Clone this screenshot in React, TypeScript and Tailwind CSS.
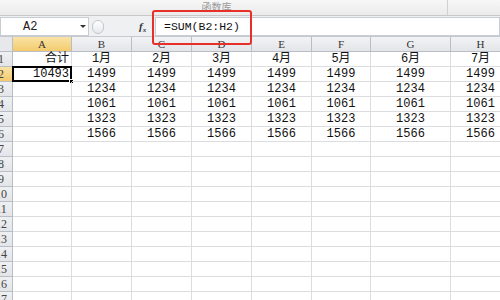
import React from "react";

const cols = ["A", "B", "C", "D", "E", "F", "G", "H"];
const months = ["1月", "2月", "3月", "4月", "5月", "6月", "7月"];
const values = ["1499", "1234", "1061", "1323", "1566"];
const rowCount = 17;

const cellFont = { fontFamily: '"Liberation Mono", "Noto Sans CJK SC", monospace' };

export default function App() {
  const rows = Array.from({ length: rowCount }, (_, i) => i + 1);

  const cellText = (r: number, c: number) => {
    if (c === 0) {
      if (r === 1) return "合计";
      if (r === 2) return "10493";
      return "";
    }
    if (r === 1) return months[c - 1];
    if (r >= 2 && r <= 6) return values[r - 2];
    return "";
  };

  return (
    <div className="w-[500px] h-[300px] overflow-hidden bg-white relative">
      {/* ribbon strip */}
      <div className="h-[16px] border-b border-[#c8c8c8] bg-gradient-to-b from-[#f7f7f7] to-[#ebebeb] flex">
        <div className="w-[448px] border-r border-[#d0d0d0] flex justify-center">
          <span
            className="text-[10px] leading-[14px] text-[#9a9a9a] ml-[-14px]"
            style={{ fontFamily: '"Noto Sans CJK SC", sans-serif' }}
          >
            函数库
          </span>
        </div>
      </div>

      {/* formula bar */}
      <div className="h-[21px] flex items-stretch bg-[#eef0f2] border-b border-[#c6c9ce] pt-px">
        <div className="w-[89px] bg-white border border-[#c8cdd4] flex items-center relative">
          <span className="text-[12px] text-[#222] ml-[22px]" style={cellFont}>
            A2
          </span>
          <span className="absolute left-[79px] top-[7px] w-0 h-0 border-l-[3px] border-r-[3px] border-t-[3px] border-l-transparent border-r-transparent border-t-[#333]"></span>
        </div>
        <div className="w-[50px] flex items-center">
          <div className="w-[12px] h-[14px] ml-[3px] rounded-full border border-[#c4c8ce] bg-gradient-to-b from-white to-[#e6e8eb]"></div>
        </div>
        <div className="w-[16px] flex items-center">
          <span
            className="italic text-[11px] text-[#333] font-semibold"
            style={{ fontFamily: '"Liberation Serif", serif' }}
          >
            f<sub className="text-[7px]">x</sub>
          </span>
        </div>
        <div className="flex-1 bg-white border border-[#c8cdd4] flex items-center">
          <span className="text-[11.5px] text-[#111] ml-[8px]" style={cellFont}>
            =SUM(B2:H2)
          </span>
        </div>
      </div>

      {/* sheet grid */}
      <div
        className="grid grid-cols-[13px_59px_60px_60px_60px_60px_59px_80px_60px] auto-rows-[15px]"
        style={cellFont}
      >
        {/* header row */}
        <div className="bg-[#e6e8eb] border-r border-b border-[#b9bec6] relative">
          <span className="absolute right-[2px] bottom-[2px] w-0 h-0 border-l-[7px] border-t-[7px] border-l-transparent border-t-transparent border-b-0 border-r-0 [border-right:0] [border-bottom:7px_solid_#c9ccd0] hidden"></span>
        </div>
        {cols.map((c) => (
          <div
            key={c}
            className={
              "border-r border-b border-[#b9bec6] flex items-center justify-center text-[11px] leading-[15px] text-[#333] " +
              (c === "A" ? "bg-gradient-to-b from-[#fae3a4] to-[#f3cb6c]" : "bg-gradient-to-b from-[#f2f3f5] to-[#e3e5e8]")
            }
            style={{ fontFamily: '"Liberation Serif", serif' }}
          >
            {c}
          </div>
        ))}

        {rows.map((r) => (
          <React.Fragment key={r}>
            <div
              className={
                "border-r border-b border-[#b9bec6] overflow-hidden " +
                (r === 2 ? "bg-gradient-to-b from-[#fae3a4] to-[#f3cb6c]" : "bg-gradient-to-b from-[#eef0f2] to-[#e3e5e8]")
              }
            >
              <div
                className="w-[28px] ml-[-13px] text-center text-[12px] leading-[15px] text-[#444]"
                style={{ fontFamily: '"Liberation Serif", serif' }}
              >
                {r}
              </div>
            </div>
            {cols.map((c, ci) => {
              const t = cellText(r, ci);
              const active = r === 2 && ci === 0;
              return (
                <div
                  key={c}
                  className={
                    "relative border-r border-b border-[#dcdde0] text-[12px] leading-[14px] text-[#111] whitespace-nowrap " +
                    (ci === 0 ? "text-right pr-[2px]" : "text-center")
                  }
                >
                  {t}
                  {active && (
                    <div className="absolute left-[-1px] top-[-1px] w-[60px] h-[16px] border-2 border-black">
                      <div className="absolute right-[-4px] bottom-[-4px] w-[5px] h-[5px] bg-black border border-white"></div>
                    </div>
                  )}
                </div>
              );
            })}
          </React.Fragment>
        ))}
      </div>

      {/* red annotation box */}
      <div className="absolute left-[152px] top-[10px] w-[100px] h-[35px] border-2 border-[#e8302a] rounded-[3px]"></div>
    </div>
  );
}
